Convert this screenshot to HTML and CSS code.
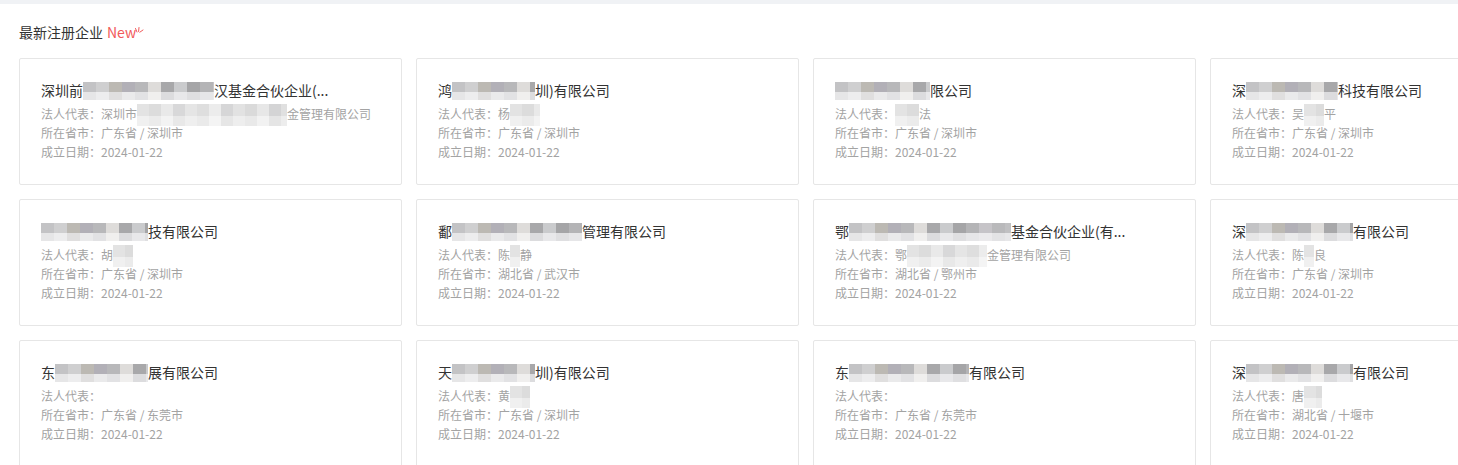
FILE: index.html
```html
<!DOCTYPE html>
<html lang="zh-CN">
<head>
  <meta charset="UTF-8" />
  <meta name="viewport" content="width=device-width, initial-scale=1.0"/>
  <title>最新注册企业</title>
  <link rel="stylesheet" href="styles.css">
</head>
<body>

<div class="topbar"></div>

<div class="panel">
  <div class="panel-title">
    最新注册企业
    <span class="new">New<svg class="spark" width="10" height="10" viewBox="0 0 10 10"><path d="M1.5 1.5 L3 5 M5 0.5 L4.6 4.5 M9 3 L5.8 5.2" stroke="#f15a5a" stroke-width="1" fill="none" stroke-linecap="round"/></svg></span>
  </div>

  <div class="grid">

    <div class="card">
      <div class="name">深圳前<span class="blur w131"></span>汉基金合伙企业(...</div>
      <div class="line">法人代表：深圳市<span class="blur sub w150"></span>金管理有限公司</div>
      <div class="line">所在省市：广东省 / 深圳市</div>
      <div class="line">成立日期：2024-01-22</div>
    </div>

    <div class="card">
      <div class="name">鸿<span class="blur w83"></span>圳)有限公司</div>
      <div class="line">法人代表：杨<span class="blur sub w30"></span></div>
      <div class="line">所在省市：广东省 / 深圳市</div>
      <div class="line">成立日期：2024-01-22</div>
    </div>

    <div class="card">
      <div class="name"><span class="blur w95"></span>限公司</div>
      <div class="line">法人代表：<span class="blur sub w24"></span>法</div>
      <div class="line">所在省市：广东省 / 深圳市</div>
      <div class="line">成立日期：2024-01-22</div>
    </div>

    <div class="card">
      <div class="name">深<span class="blur w92"></span>科技有限公司</div>
      <div class="line">法人代表：吴<span class="blur sub w20"></span>平</div>
      <div class="line">所在省市：广东省 / 深圳市</div>
      <div class="line">成立日期：2024-01-22</div>
    </div>

    <div class="card">
      <div class="name"><span class="blur w107"></span>技有限公司</div>
      <div class="line">法人代表：胡<span class="blur sub w20"></span></div>
      <div class="line">所在省市：广东省 / 深圳市</div>
      <div class="line">成立日期：2024-01-22</div>
    </div>

    <div class="card">
      <div class="name">鄱<span class="blur w130"></span>管理有限公司</div>
      <div class="line">法人代表：陈<span class="blur sub w10"></span>静</div>
      <div class="line">所在省市：湖北省 / 武汉市</div>
      <div class="line">成立日期：2024-01-22</div>
    </div>

    <div class="card">
      <div class="name">鄂<span class="blur w162"></span>基金合伙企业(有...</div>
      <div class="line">法人代表：鄂<span class="blur sub w80"></span>金管理有限公司</div>
      <div class="line">所在省市：湖北省 / 鄂州市</div>
      <div class="line">成立日期：2024-01-22</div>
    </div>

    <div class="card">
      <div class="name">深<span class="blur w107"></span>有限公司</div>
      <div class="line">法人代表：陈<span class="blur sub w10"></span>良</div>
      <div class="line">所在省市：广东省 / 深圳市</div>
      <div class="line">成立日期：2024-01-22</div>
    </div>

    <div class="card">
      <div class="name">东<span class="blur w93"></span>展有限公司</div>
      <div class="line">法人代表：</div>
      <div class="line">所在省市：广东省 / 东莞市</div>
      <div class="line">成立日期：2024-01-22</div>
    </div>

    <div class="card">
      <div class="name">天<span class="blur w83"></span>圳)有限公司</div>
      <div class="line">法人代表：黄<span class="blur sub w20"></span></div>
      <div class="line">所在省市：广东省 / 深圳市</div>
      <div class="line">成立日期：2024-01-22</div>
    </div>

    <div class="card">
      <div class="name">东<span class="blur w120"></span>有限公司</div>
      <div class="line">法人代表：</div>
      <div class="line">所在省市：广东省 / 东莞市</div>
      <div class="line">成立日期：2024-01-22</div>
    </div>

    <div class="card">
      <div class="name">深<span class="blur w107"></span>有限公司</div>
      <div class="line">法人代表：唐<span class="blur sub w18"></span></div>
      <div class="line">所在省市：湖北省 / 十堰市</div>
      <div class="line">成立日期：2024-01-22</div>
    </div>

  </div>
</div>

</body>
</html>
```

FILE: styles.css
```css
html, body {
  margin: 0;
  padding: 0;
  background: #fff;
  overflow: hidden;
  font-family: "Noto Sans CJK SC", "Microsoft YaHei", sans-serif;
}

.topbar {
  height: 4px;
  background: #f0f2f5;
}

.panel {
  padding: 18px 0 0 19px;
}

.panel-title {
  font-size: 14px;
  line-height: 20px;
  color: #333;
  display: flex;
  align-items: center;
}

.new {
  position: relative;
  margin-left: 4px;
  color: #f15a5a;
  font-size: 14px;
}

.spark {
  position: absolute;
  top: 5px;
  right: -8px;
}

.grid {
  margin-top: 16px;
  display: grid;
  grid-template-columns: repeat(4, 383px);
  gap: 14px;
  width: max-content;
}

.card {
  box-sizing: border-box;
  height: 127px;
  border: 1px solid #e6e6e6;
  border-radius: 2px;
  padding: 21px 20px 0 21px;
  white-space: nowrap;
}

.name {
  font-size: 14px;
  line-height: 20px;
  color: #333;
  margin-bottom: 4px;
}

.line {
  font-size: 12px;
  line-height: 19px;
  color: #a3a3a3;
}

/* mosaic used to hide personal data */
.blur {
  display: inline-block;
  height: 18px;
  vertical-align: -4px;
  background:
    linear-gradient(90deg, #c3c3c5 0 13px, #cfcfd0 13px 26px, #bcb9b3 26px 39px, #b2b0b7 39px 52px,
      #b8b8ba 52px 65px, #dedcda 65px 78px, #a8a8aa 78px 91px, #cacbcd 91px 104px,
      #a5a5a7 104px 117px, #b4b4b6 117px 130px, #c6c4c8 130px 143px, #b9b9bb 143px 156px,
      #c0c0c2 156px 169px) top left / 100% 10px no-repeat,
    linear-gradient(90deg, #e6e6e7 0 13px, #ededee 13px 26px, #e0dfdf 26px 39px, #eaeaeb 39px 52px,
      #e2e2e4 52px 65px, #f0efee 65px 78px, #dcdcde 78px 91px, #e8e8ea 91px 104px,
      #dfdfe1 104px 117px, #e6e6e8 117px 130px, #ebeaec 130px 143px, #e3e3e5 143px 156px,
      #e7e7e9 156px 169px) bottom left / 100% 8px no-repeat;
}

.blur.sub {
  position: relative;
  z-index: 1;
  height: 22px;
  vertical-align: top;
  margin-bottom: -3px;
  background:
    linear-gradient(90deg, #e3e3e3 0 12px, #dcdcdc 12px 24px, #e9e9e9 24px 36px, #d8d8d9 36px 48px,
      #e5e5e5 48px 60px, #dedede 60px 72px, #ececec 72px 84px, #d6d6d7 84px 96px,
      #e2e2e2 96px 108px, #dadada 108px 120px, #e7e7e7 120px 132px, #d4d4d5 132px 144px,
      #e0e0e0 144px 156px) top left / 100% 12px no-repeat,
    linear-gradient(90deg, #f0f0f0 0 12px, #ebebeb 12px 24px, #f3f3f3 24px 36px, #e8e8e8 36px 48px,
      #efefef 48px 60px, #eaeaea 60px 72px, #f4f4f4 72px 84px, #e6e6e6 84px 96px,
      #eeeeee 96px 108px, #e9e9e9 108px 120px, #f2f2f2 120px 132px, #e5e5e5 132px 144px,
      #ededed 144px 156px) bottom left / 100% 10px no-repeat;
}

.w10 { width: 10px; }
.w18 { width: 18px; }
.w20 { width: 20px; }
.w24 { width: 24px; }
.w30 { width: 30px; }
.w80 { width: 80px; }
.w83 { width: 83px; }
.w92 { width: 92px; }
.w93 { width: 93px; }
.w95 { width: 95px; }
.w107 { width: 107px; }
.w120 { width: 120px; }
.w130 { width: 130px; }
.w131 { width: 131px; }
.w150 { width: 150px; }
.w162 { width: 162px; }
```
